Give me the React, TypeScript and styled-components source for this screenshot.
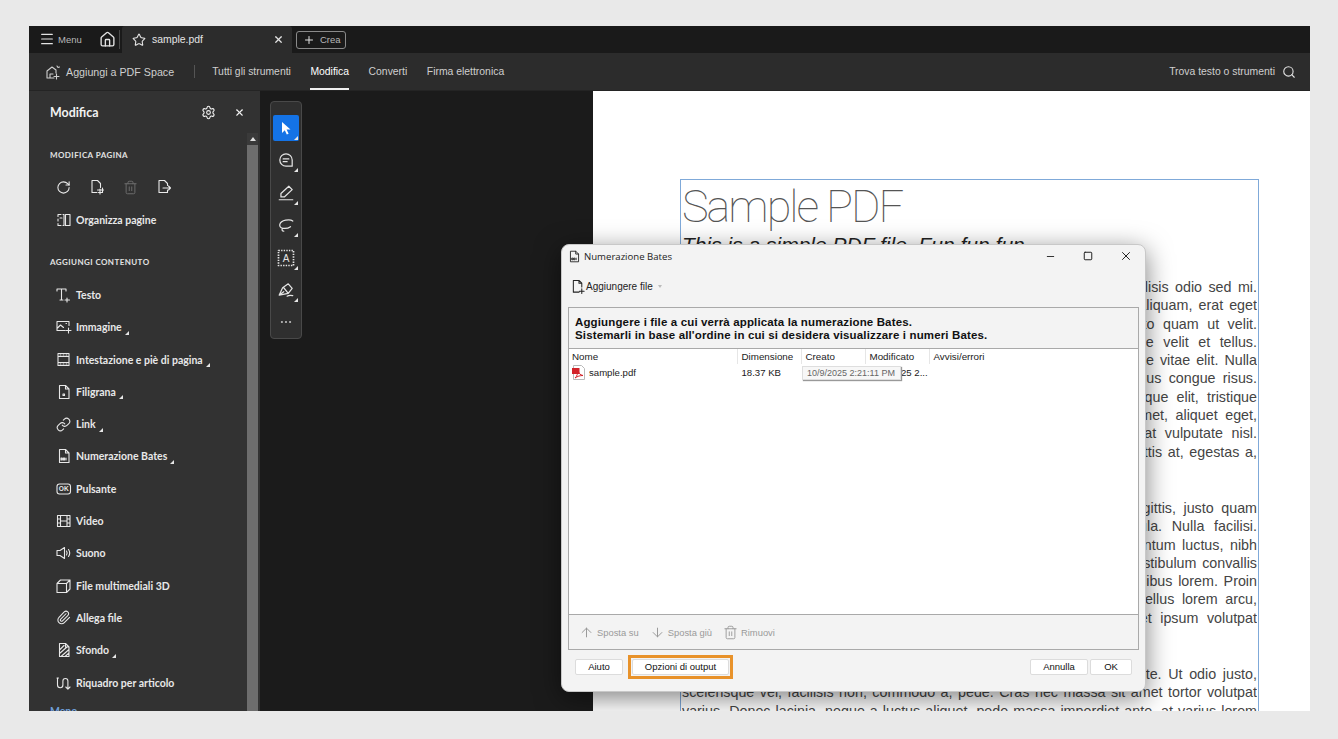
import React from "react";
import styled, { createGlobalStyle } from "styled-components";
import {
	ArrowDown,
	ArrowUp,
	Home,
	Link,
	Menu,
	Minus,
	MoreHorizontal,
	Paperclip,
	Plus,
	RotateCw,
	Search,
	Settings,
	Square,
	Star,
	Trash2,
	X,
} from "lucide-react";

const GlobalStyle = createGlobalStyle`
	html, body {
		margin: 0;
		padding: 0;
		background: #e9e9e9;
	}
	* {
		box-sizing: border-box;
	}
`;

const Shell = styled.div`
	position: relative;
	width: 1281px;
	height: 685px;
	margin: 26px 0 28px 29px;
	display: flex;
	flex-direction: column;
	overflow: hidden;
	font-family: "Liberation Sans", Arial, sans-serif;
	background: #1b1b1b;
`;

const TabBar = styled.div`
	height: 27px;
	flex: none;
	display: flex;
	align-items: stretch;
	background: #1a1a1a;
	color: #d0d0d0;
`;

const MenuButton = styled.div`
	display: flex;
	align-items: center;
	gap: 3px;
	padding: 0 0 1px 10px;
	width: 68px;
	font-size: 9.5px;
	color: #b8b8b8;
`;

const HomeButton = styled.div`
	width: 23px;
	display: flex;
	align-items: center;
	justify-content: center;
	border-right: 1px solid #4a4a4a;
	margin: 4px 2px 4px 0;
	padding-right: 2px;
`;

const Tab = styled.div`
	width: 170px;
	display: flex;
	align-items: center;
	padding: 0 8px 0 10px;
	background: #2c2c2c;
	border-radius: 3px 3px 0 0;
	font-size: 10.4px;
	color: #e4e4e4;
`;

const TabName = styled.span`
	flex: 1;
	margin-left: 6px;
`;

const CreateButton = styled.div`
	margin: 5px 0 4px 4px;
	width: 50px;
	border: 1px solid #8a8a8a;
	border-radius: 3px;
	display: flex;
	align-items: center;
	gap: 5px;
	padding: 0 0 1px 6px;
	font-size: 9.5px;
	color: #b8b8b8;
`;

const NavBar = styled.div`
	height: 38px;
	flex: none;
	display: flex;
	align-items: stretch;
	background: #2c2c2c;
	border-bottom: 1px solid #242424;
	padding-left: 16px;
	font-size: 10.4px;
	color: #cfcfcf;
`;

const SpaceLink = styled.div`
	display: flex;
	align-items: center;
	gap: 5px;
	padding-right: 20px;
	font-size: 10.7px;
`;

const NavSep = styled.div`
	width: 1px;
	height: 13px;
	align-self: center;
	background: #555;
	margin-right: 17px;
`;

const NavItem = styled.div<{ $active?: boolean }>`
	display: flex;
	align-items: center;
	margin-right: 19.5px;
	color: ${(props) => (props.$active ? "#ffffff" : "#cfcfcf")};
	border-bottom: 2px solid ${(props) => (props.$active ? "#f0f0f0" : "transparent")};
	padding-top: 2px;
`;

const NavSearch = styled.div`
	margin-left: auto;
	display: flex;
	align-items: center;
	gap: 7px;
	padding-right: 14px;
`;

const Main = styled.div`
	flex: 1;
	min-height: 0;
	display: flex;
`;

const Panel = styled.aside`
	width: 231px;
	flex: none;
	background: #323232;
	display: flex;
	flex-direction: column;
	color: #eaeaea;
	font-family: Lato, "Noto Sans", sans-serif;
	padding-right: 2px;
`;

const PanelHeader = styled.div`
	height: 42px;
	flex: none;
	display: flex;
	align-items: center;
	padding: 0 13px 0 21px;
	font-size: 12.4px;
	font-weight: 700;
	color: #f2f2f2;
`;

const PanelTitle = styled.span`
	flex: 1;
`;

const PanelClose = styled.span`
	display: flex;
	margin-left: 18px;
`;

const PanelBody = styled.div`
	flex: 1;
	min-height: 0;
	display: flex;
`;

const PanelContent = styled.div`
	flex: 1;
	min-width: 0;
	overflow: hidden;
	padding-left: 21px;
`;

const Scrollbar = styled.div`
	width: 11px;
	flex: none;
	display: flex;
	flex-direction: column;
`;

const ScrollUp = styled.div`
	height: 12px;
	display: flex;
	align-items: center;
	justify-content: center;
	background: #3a3a3a;
	&::before {
		content: "";
		border: 3px solid transparent;
		border-top: 0;
		border-bottom: 4px solid #e0e0e0;
	}
`;

const ScrollThumb = styled.div`
	flex: 1;
	background: #6d6d6d;
`;

const SectionTitle = styled.div<{ $top: number }>`
	height: 14px;
	line-height: 14px;
	margin-top: ${(props) => props.$top}px;
	font-size: 8px;
	font-weight: 700;
	letter-spacing: 0.42px;
	color: #e2e2e2;
`;

const PageTools = styled.div`
	margin: 15px 0 7px 5.5px;
	height: 20px;
	display: flex;
	align-items: center;
	gap: 18px;
`;

const ToolGroup = styled.div`
	margin-top: 9.5px;
`;

const ToolRow = styled.div`
	height: 32.3px;
	display: flex;
	align-items: center;
	padding-left: 6px;
	font-size: 10.5px;
	font-weight: 700;
	color: #e8e8e8;
`;

const ToolIcon = styled.span`
	width: 20px;
	display: flex;
	flex: none;
`;

const CornerMark = styled.span`
	width: 0;
	height: 0;
	margin: 11px 0 0 3px;
	border-left: 4px solid transparent;
	border-bottom: 4px solid #e6e6e6;
`;

const MoreLink = styled.div`
	height: 24px;
	line-height: 24px;
	font-size: 10.5px;
	font-weight: 700;
	color: #6f9fd8;
`;

const Canvas = styled.div`
	width: 333px;
	flex: none;
	position: relative;
	background: #1b1b1b;
`;

const QuickBar = styled.div`
	position: absolute;
	left: 10px;
	top: 10px;
	width: 32px;
	height: 238px;
	background: #2f2f2f;
	border: 1px solid #494949;
	border-radius: 4px;
	display: flex;
	flex-direction: column;
	align-items: center;
	padding-top: 2px;
`;

const Grip = styled.div`
	width: 26px;
	height: 3px;
	background: #6a6a6a;
	border-radius: 1px;
	margin-bottom: 11px;
`;

const QuickButton = styled.div<{ $selected?: boolean; $plain?: boolean }>`
	position: relative;
	width: 26px;
	height: 26px;
	flex: none;
	margin-bottom: 6.4px;
	display: flex;
	align-items: center;
	justify-content: center;
	border-radius: 2px;
	color: ${(props) => (props.$plain ? "#bbbbbb" : "#e4e4e4")};
	background: ${(props) => (props.$selected ? "#1473e6" : "transparent")};
	&::after {
		content: "";
		display: ${(props) => (props.$plain ? "none" : "block")};
		position: absolute;
		right: 1px;
		bottom: 1px;
		border-left: 4px solid transparent;
		border-bottom: 4px solid #e6e6e6;
	}
`;

const PageArea = styled.div`
	flex: 1;
	min-width: 0;
	background: #ffffff;
	padding: 88px 0 0 87px;
	overflow: hidden;
`;

const TextFrame = styled.div`
	width: 579px;
	height: 600px;
	border: 1px solid #7fa9d9;
	padding: 0 1px;
	font-family: "Liberation Sans", Arial, sans-serif;
	color: #444;
`;

const DocTitle = styled.div`
	font-family: Roboto, "Liberation Sans", sans-serif;
	font-weight: 100;
	font-size: 45px;
	line-height: 53px;
	letter-spacing: -2px;
	color: #555;
	white-space: nowrap;
`;

const DocSub = styled.div`
	font-style: italic;
	font-size: 21px;
	line-height: 24px;
	margin: 0 0 21px;
	color: #222;
	white-space: nowrap;
`;

const DocPara = styled.div`
	margin-bottom: 38px;
	font-size: 14.3px;
`;

const DocLine = styled.div`
	height: 18.3px;
	line-height: 18.3px;
	overflow: hidden;
	text-align: justify;
	text-align-last: justify;
`;

const Dialog = styled.div`
	position: absolute;
	left: 532px;
	top: 218px;
	width: 585px;
	height: 448px;
	background: #f3f3f3;
	border-radius: 8px;
	border: 1px solid #c8c8c8;
	box-shadow: 0 6px 26px rgba(0, 0, 0, 0.5);
	display: flex;
	flex-direction: column;
	font-size: 9.8px;
	color: #1a1a1a;
`;

const TitleBar = styled.div`
	height: 22px;
	flex: none;
	display: flex;
	align-items: center;
	padding-left: 6px;
	font-family: "Open Sans", sans-serif;
	font-size: 9.6px;
	color: #222;
`;

const TitleText = styled.span`
	flex: 1;
	margin-left: 3px;
`;

const WindowControl = styled.span`
	width: 37.5px;
	display: flex;
	justify-content: center;
	position: relative;
	left: -0.5px;
`;

const DialogTools = styled.div`
	height: 40px;
	flex: none;
	display: flex;
	align-items: center;
	padding: 0 0 2px 9px;
	font-size: 10px;
	color: #222;
`;

const DropCaret = styled.span`
	margin-left: 5px;
	border: 2.5px solid transparent;
	border-top: 3px solid #bbb;
	border-bottom: 0;
`;

const FileBox = styled.div`
	height: 343px;
	flex: none;
	margin: 0 6px;
	border: 1px solid #a9a9a9;
	display: flex;
	flex-direction: column;
`;

const Instructions = styled.div`
	height: 41px;
	flex: none;
	border-bottom: 1px solid #a9a9a9;
	padding: 7.5px 6px 0;
	font-size: 11.5px;
	font-weight: 700;
	line-height: 13.5px;
	letter-spacing: 0.14px;
	color: #111;
`;

const FileList = styled.div`
	position: relative;
	flex: 1;
	background: #ffffff;
	border-bottom: 1px solid #a9a9a9;
`;

const ListRow = styled.div`
	height: 16px;
	display: grid;
	grid-template-columns: 169px 64px 64px 64px 1fr;
	align-items: center;
	&:first-child {
		height: 15px;
	}
`;

const HeaderCell = styled.div`
	height: 100%;
	display: flex;
	align-items: center;
	padding-left: 3.5px;
	border-right: 1px solid #e6e6e6;
	color: #222;
	&:first-child {
		padding-left: 3px;
	}
	&:last-child {
		border-right: 0;
	}
`;

const Cell = styled.div`
	display: flex;
	align-items: center;
	gap: 3px;
	padding-left: 3.5px;
	font-size: 9.6px;
	white-space: nowrap;
	overflow: hidden;
	&:first-child {
		padding-left: 3px;
	}
`;

const TipCell = styled(Cell)`
	padding-left: 35px;
`;

const DateTip = styled.div`
	position: absolute;
	left: 233px;
	top: 17px;
	width: 99px;
	height: 14px;
	display: flex;
	align-items: center;
	padding-left: 4px;
	background: #f7f7f7;
	border: 1px solid #dedede;
	box-shadow: 1px 1px 1px #999;
	font-size: 9px;
	white-space: nowrap;
	color: #666;
`;

const MoveBar = styled.div`
	flex: none;
	height: 34px;
	display: flex;
	align-items: center;
	gap: 11px;
	padding-left: 10px;
	background: #f3f3f3;
	font-size: 9.4px;
	color: #9a9a9a;
`;

const MoveItem = styled.span`
	display: flex;
	align-items: center;
	gap: 3px;
`;

const DialogFooter = styled.div`
	flex: 1;
	display: flex;
	align-items: center;
	padding: 0 13px 8px;
	font-size: 9.5px;
`;

const PushButton = styled.div<{ $width: number }>`
	width: ${(props) => props.$width}px;
	height: 16px;
	display: flex;
	align-items: center;
	justify-content: center;
	background: #ffffff;
	border: 1px solid #dcdcdc;
	border-radius: 2px;
	color: #111;
`;

const Highlight = styled.div`
	margin-left: 5px;
	border: 3px solid #e8922a;
	padding: 1px;
	display: flex;
`;

const FooterSpacer = styled.div`
	flex: 1;
`;

const FooterGap = styled.div`
	width: 2px;
`;

const Glyph = styled.svg`
	fill: none;
	stroke: currentColor;
	stroke-width: 1.1;
	stroke-linecap: round;
	stroke-linejoin: round;
	flex: none;
`;

const OcrFrame = styled.rect`
	stroke-width: 1.7;
	stroke-dasharray: 1.4 1.2;
	stroke-linecap: butt;
`;

const icon = (body: React.ReactNode, size = 16) => (
	<Glyph width={size} height={size} viewBox="0 0 16 16">
		{body}
	</Glyph>
);

const docShape = "M3.5 1.5h6l3.5 3.5v9.5h-9.5zM9.5 1.5v3.5h3.5";

const tools = [
	{
		label: "Testo",
		icon: icon(<path d="M1 4V2h9v2M5.5 2v11M4 13h3M11 11v4M9 13h4.5" />),
	},
	{
		label: "Immagine",
		menu: true,
		icon: icon(<path d="M1 2.5h12v4M1 2.5v9h8M1.5 9l3-3 3 2.5M10 4.5h.5M12.5 9v5M10 11.5h5" />),
	},
	{
		label: "Intestazione e piè di pagina",
		menu: true,
		icon: icon(<path d="M2 1.5h11v12H2zM2 4.5h11M2 10.5h11M4 3h1M7 3h1M10 3h1M4 12h1M7 12h1M10 12h1" />),
	},
	{
		label: "Filigrana",
		menu: true,
		icon: icon(<path d={`${docShape}M7 10h1.5v1.5H7z`} />),
	},
	{ label: "Link", menu: true, icon: <Link size={15} strokeWidth={1.7} /> },
	{
		label: "Numerazione Bates",
		menu: true,
		icon: icon(<path d={`${docShape}M5 10h1.2v2H5zM7.4 10h1.2v2H7.4zM10 10v2`} />),
	},
	{
		label: "Pulsante",
		icon: (
			<Glyph width={16} height={16} viewBox="0 0 16 16">
				<rect x="1" y="3" width="13.5" height="10" rx="2.5" />
				<text x="7.7" y="10.4" fontSize="6.6" textAnchor="middle" fill="currentColor" stroke="none" fontFamily="Liberation Sans">
					OK
				</text>
			</Glyph>
		),
	},
	{
		label: "Video",
		icon: icon(<path d="M1.5 2.5h12.5v11H1.5zM4.5 2.5v11M11 2.5v11M1.5 6h3M1.5 10h3M11 6h3M11 10h3M4.5 8H11" />),
	},
	{
		label: "Suono",
		icon: icon(<path d="M1 5.5h3L8.5 2.5v11L4 10.5H1zM10.5 6c.8 1.2.8 2.8 0 4M12.5 4.5c1.4 2 1.4 5 0 7" />),
	},
	{ label: "File multimediali 3D", icon: icon(<path d="M1 5.5h9.5v9H1zM1 5.5l3.5-3.5H14v9l-3.5 3.5M10.5 5.5L14 2" />) },
	{ label: "Allega file", icon: <Paperclip size={15} strokeWidth={1.7} /> },
	{
		label: "Sfondo",
		menu: true,
		icon: icon(<path d={`${docShape}M3.5 8L8 3.5M3.5 11.5L11 5M5 14.5l8-7M9 14.5l4-3.5`} />),
	},
	{
		label: "Riquadro per articolo",
		icon: icon(<path d="M1.5 3v7a2.7 2.7 0 0 0 5.4 0V6a2.5 2.5 0 0 1 5 0v8M9.8 12l2.1 2.2L14 12M1 3h1.5" />),
	},
];

const quickIcons = [
	<Glyph key="arrow" width={16} height={16} viewBox="0 0 16 16">
		<path d="M4 2l8.5 7.5H8.6l2 4.2-1.8.8-2-4.3L4 13z" fill="#ffffff" stroke="none" />
	</Glyph>,
	icon(<path d="M8 2.5a5.5 5.5 0 1 0 0 11h5.5V8A5.5 5.5 0 0 0 8 2.5zM5.5 7h5M5.5 9.5h3.5" />, 18),
	icon(<path d="M10.5 2l3 3-7 6.5H3.5V8.5zM2 14h6.5M9 14h5" />, 18),
	icon(<path d="M14 4.5C11.5 2.500 3.5 3.500 2.500 7.500S8.500 12 12 9.500M5 11c-1 1-.5 2.500 1 2.500" />, 18),
	<Glyph key="ocr" width={20} height={20} viewBox="0 0 20 20">
		<OcrFrame x="2.5" y="2.5" width="15" height="15" />
		<text x="10" y="14" fontSize="10" textAnchor="middle" fill="currentColor" stroke="none" fontFamily="Liberation Sans">
			A
		</text>
	</Glyph>,
	icon(<path d="M2 12.500L5 6l5-3.500 3.500 4L10 11zM2 12.500l4-3M9 13.500c1.500-1 3-1 5-.5M6 6l4 5" />, 18),
];

const docParagraphs = [
	[
		"Lorem ipsum dolor sit amet, consectetuer adipiscing elit. Vivamus facilisis odio sed mi.",
		"Curabitur suscipit. Nullam vel nisi. Etiam semper ipsum lectus. Proin aliquam, erat eget",
		"pharetra commodo, eros mi condimentum quam, sed commodo justo quam ut velit.",
		"Integer a erat. Cras laoreet ligula cursus enim. Aenean scelerisque velit et tellus.",
		"Vestibulum dictum aliquet sem. Nulla facilisi. Vestibulum accumsan ante vitae elit. Nulla",
		"erat dolor, blandit in, rutrum quis, semper pulvinar, enim. Nullam varius congue risus.",
		"Vivamus sollicitudin, metus ut interdum eleifend, nisi tellus pellentesque elit, tristique",
		"accumsan eros quam et risus. Suspendisse libero odio, mattis sit amet, aliquet eget,",
		"hendrerit vel, nulla. Sed vitae. Aliquam erat volutpat. Aliquam feugiat vulputate nisl.",
		"Suspendisse potenti nulla pretium ante et mollis. Proin velit ligula, sagittis at, egestas a,",
	],
	[
		"Pellentesque sit amet lectus. Praesent pulvinar, nunc quis iaculis sagittis, justo quam",
		"lobortis tortor, sed vestibulum dui metus venenatis tempus mi ligula. Nulla facilisi.",
		"Vestibulum ante ipsum primis in faucibus orci luctus et ultrices, fermentum luctus, nibh",
		"sed tincidunt tempus, ante ligula mattis nunc, sit amet tempor enim vestibulum convallis",
		"mauris magna quis nulla, at dictum nisi ultricies vitae. Donec eget faucibus lorem. Proin",
		"vitae mauris quis augue ornare tempus sed non velit, semper. Phasellus lorem arcu,",
		"feugiat eu, gravida eu, consequat molestie, nulla dolor sed sit amet ipsum volutpat",
	],
	[
		"Maecenas luctus, sem a fermentum dictum, mi nisl tempus ornare ante. Ut odio justo,",
		"scelerisque vel, facilisis non, commodo a, pede. Cras nec massa sit amet tortor volutpat",
		"varius. Donec lacinia, neque a luctus aliquet, pede massa imperdiet ante, at varius lorem",
	],
];

const PdfFileIcon = () => (
	<svg width={14} height={15} viewBox="0 0 14 15">
		<path d="M1.5.5h8l3 3v11h-11z" fill="#fff" stroke="#b9b9b9" />
		<path d="M0 3h7.5v6H0z" fill="#d2232a" />
		<path d="M3 13c2-1.500 3-5 3-8 .5 3 2 5 5 5.500-3 0-5.500.8-8 2.500z" fill="none" stroke="#d2232a" strokeWidth="1" />
	</svg>
);

const App = () => {
	return (
		<Shell>
			<GlobalStyle />
			<TabBar>
				<MenuButton>
					<Menu size={16} strokeWidth={1.8} color="#e4e4e4" />
					Menu
				</MenuButton>
				<HomeButton>
					<Home size={17} strokeWidth={1.9} color="#e4e4e4" />
				</HomeButton>
				<Tab>
					<Star size={14} strokeWidth={1.9} />
					<TabName>sample.pdf</TabName>
					<X size={11} strokeWidth={2.6} />
				</Tab>
				<CreateButton>
					<Plus size={12} strokeWidth={2} color="#e4e4e4" />
					Crea
				</CreateButton>
			</TabBar>
			<NavBar>
				<SpaceLink>
					{icon(<path d="M2 14V7l5-4 4 3v3M2 14h7M5 14v-4h3M12 2l1 1.500M14.500 3l-1.500.5M11.500 10v5M9 12.500h5" />)}
					Aggiungi a PDF Space
				</SpaceLink>
				<NavSep />
				<NavItem>Tutti gli strumenti</NavItem>
				<NavItem $active>Modifica</NavItem>
				<NavItem>Converti</NavItem>
				<NavItem>Firma elettronica</NavItem>
				<NavSearch>
					Trova testo o strumenti
					<Search size={14} strokeWidth={1.9} color="#e4e4e4" />
				</NavSearch>
			</NavBar>
			<Main>
				<Panel>
					<PanelHeader>
						<PanelTitle>Modifica</PanelTitle>
						<Settings size={15} strokeWidth={1.7} />
						<PanelClose>
							<X size={11} strokeWidth={2.4} />
						</PanelClose>
					</PanelHeader>
					<PanelBody>
						<PanelContent>
							<SectionTitle $top={15}>MODIFICA PAGINA</SectionTitle>
							<PageTools>
								<RotateCw size={15} strokeWidth={1.7} />
								{icon(<path d="M3 1.500h5.500l3 3v4M3 1.500v12h5M11 10v5M8.500 11h6M13.500 9v4.500h-4" />)}
								<Trash2 size={15} strokeWidth={1.5} color="#6f6f6f" />
								{icon(<path d="M3 1.500h5.500l3 3v2M3 1.500v12h8.500v-2.500M7 9h7.500M12.500 7l2 2-2 2" />)}
							</PageTools>
							<ToolRow>
								<ToolIcon>
									{icon(<path d="M2 4.500v-2h3M8 2.500h-1M2 7v2M2 11.500v2h3M7 13.500h1M9.500 2.500h4.500v11H9.500zM8 2.500v11M4 6h2" />)}
								</ToolIcon>
								Organizza pagine
							</ToolRow>
							<SectionTitle $top={19}>AGGIUNGI CONTENUTO</SectionTitle>
							<ToolGroup>
								{tools.map((tool) => (
									<ToolRow key={tool.label}>
										<ToolIcon>{tool.icon}</ToolIcon>
										{tool.label}
										{tool.menu && <CornerMark />}
									</ToolRow>
								))}
							</ToolGroup>
							<MoreLink>Meno</MoreLink>
						</PanelContent>
						<Scrollbar>
							<ScrollUp />
							<ScrollThumb />
						</Scrollbar>
					</PanelBody>
				</Panel>
				<Canvas>
					<QuickBar>
						<Grip />
						{quickIcons.map((glyph, index) => (
							<QuickButton key={index} $selected={index === 0}>
								{glyph}
							</QuickButton>
						))}
						<QuickButton $plain>
							<MoreHorizontal size={14} strokeWidth={1.8} />
						</QuickButton>
					</QuickBar>
				</Canvas>
				<PageArea>
					<TextFrame>
						<DocTitle>Sample PDF</DocTitle>
						<DocSub>This is a simple PDF file. Fun fun fun.</DocSub>
						{docParagraphs.map((lines) => (
							<DocPara key={lines[0]}>
								{lines.map((line) => (
									<DocLine key={line}>{line}</DocLine>
								))}
							</DocPara>
						))}
					</TextFrame>
				</PageArea>
			</Main>
			<Dialog>
				<TitleBar>
					{icon(<path d={`${docShape}M5 10h1.200v2H5zM7.400 10h1.200v2H7.400zM10 10v2`} />, 13)}
					<TitleText>Numerazione Bates</TitleText>
					<WindowControl>
						<Minus size={11} strokeWidth={2} />
					</WindowControl>
					<WindowControl>
						<Square size={10} strokeWidth={2.4} />
					</WindowControl>
					<WindowControl>
						<X size={14} strokeWidth={1.7} />
					</WindowControl>
				</TitleBar>
				<DialogTools>
					{icon(<path d="M2.500 1.500h6l3 3v4M2.500 1.500v12.500h6M8.500 1.500v3h3M11.500 10.500v5M9 13h5" />, 15)}
					Aggiungere file
					<DropCaret />
				</DialogTools>
				<FileBox>
					<Instructions>
						Aggiungere i file a cui verrà applicata la numerazione Bates.
						<br />
						Sistemarli in base all'ordine in cui si desidera visualizzare i numeri Bates.
					</Instructions>
					<FileList>
						<ListRow>
							<HeaderCell>Nome</HeaderCell>
							<HeaderCell>Dimensione</HeaderCell>
							<HeaderCell>Creato</HeaderCell>
							<HeaderCell>Modificato</HeaderCell>
							<HeaderCell>Avvisi/errori</HeaderCell>
						</ListRow>
						<ListRow>
							<Cell>
								<PdfFileIcon />
								sample.pdf
							</Cell>
							<Cell>18.37 KB</Cell>
							<Cell />
							<TipCell>25 2...</TipCell>
							<Cell />
						</ListRow>
						<DateTip>10/9/2025 2:21:11 PM</DateTip>
					</FileList>
					<MoveBar>
						<MoveItem>
							<ArrowUp size={15} strokeWidth={1.6} />
							Sposta su
						</MoveItem>
						<MoveItem>
							<ArrowDown size={15} strokeWidth={1.6} />
							Sposta giù
						</MoveItem>
						<MoveItem>
							<Trash2 size={15} strokeWidth={1.5} />
							Rimuovi
						</MoveItem>
					</MoveBar>
				</FileBox>
				<DialogFooter>
					<PushButton $width={48}>Aiuto</PushButton>
					<Highlight>
						<PushButton $width={97}>Opzioni di output</PushButton>
					</Highlight>
					<FooterSpacer />
					<PushButton $width={58}>Annulla</PushButton>
					<FooterGap />
					<PushButton $width={42}>OK</PushButton>
				</DialogFooter>
			</Dialog>
		</Shell>
	);
};

export default App;
